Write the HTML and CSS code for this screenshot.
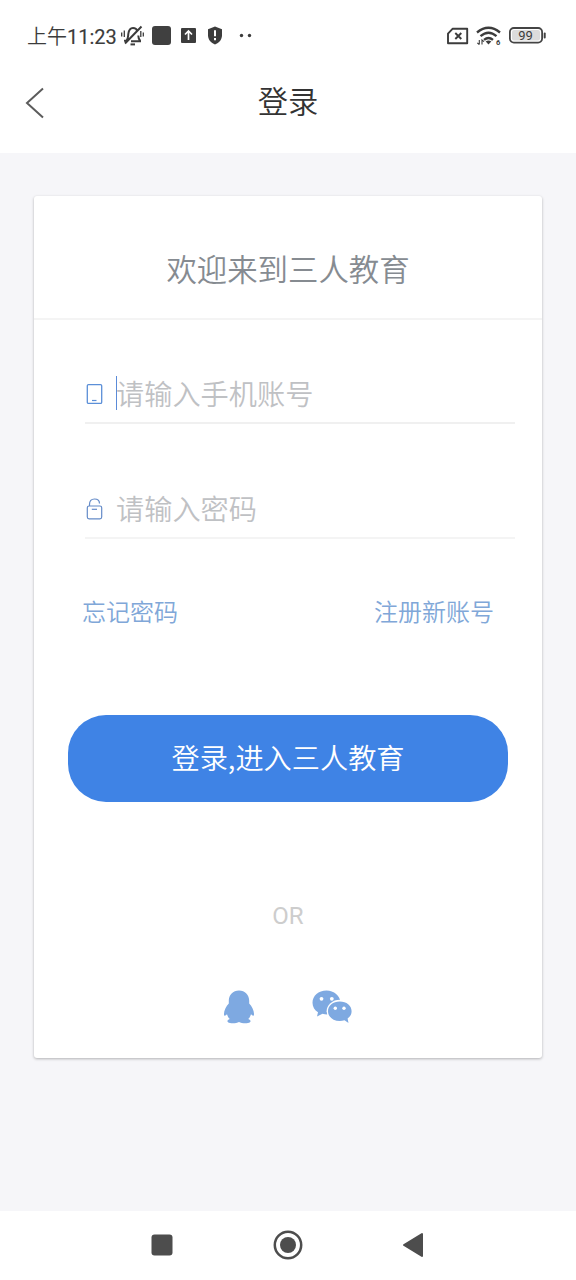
FILE: index.html
```html
<!DOCTYPE html>
<html lang="zh-CN">
<head>
<meta charset="utf-8">
<title>登录</title>
<link rel="stylesheet" href="styles.css">
</head>
<body>
<div class="screen">
  <div class="status">
    <span class="status-zh">上午</span><span class="status-time">11:23</span>
    <svg class="status-left" width="136" height="28" viewBox="118 22 136 28">
      <g fill="none" stroke="#3c3c3c" stroke-width="2">
        <path d="M131 41.200h10M124 40.700h2.500c1.800-2 1.500-4 1.800-6.700c.5-3.800 1.700-6 4.700-6c2.300 0 3.700 1 4.300 3M138.300 35.500c0 2.500.5 4 2 5.500M141.500 26.500l-16.500 17"/>
        <path d="M121.700 32.500v4M124.300 30.500v6.500M143.300 32.500v4M140.800 31v6" stroke-width="1.300"/>
        <path d="M130.500 44.400h4.500"/>
      </g>
      <rect x="152" y="26" width="19" height="19" rx="3" fill="#404040"/>
      <rect x="181" y="28" width="15" height="15" rx="1" fill="#3c3c3c"/>
      <path d="M188.500 40v-8M185 34.500l3.500-3.500l3.500 3.500" fill="none" stroke="#fff" stroke-width="1.700"/>
      <path d="M215 26.500l7 2.700v6c0 4.500-3 7.500-7 9.300c-4-1.800-7-4.800-7-9.300v-6z" fill="#3c3c3c"/>
      <path d="M215 30.200v6M215 38v2.200" stroke="#fff" stroke-width="2"/>
      <circle cx="241.500" cy="35.500" r="1.700" fill="#3c3c3c"/><circle cx="249.500" cy="35.500" r="1.700" fill="#3c3c3c"/>
    </svg>
    <svg class="status-right" width="102" height="28" viewBox="446 22 102 28">
      <path d="M452.500 28.800h14.700v14.400h-19.200v-9.600z" fill="none" stroke="#3c3c3c" stroke-width="1.900" stroke-linejoin="round"/>
      <path d="M455.300 33l6 6M461.300 33l-6 6" stroke="#3c3c3c" stroke-width="1.900"/>
      <g fill="none" stroke="#3c3c3c" stroke-width="2.300">
        <path d="M477 32.500q11.500-9.500 23 0M480.500 36.200q8-7 16 0M484 39.900q4.500-3.800 9 0"/>
      </g>
      <path d="M488.500 44.500l-2.800-3q2.800-2 5.600 0z" fill="#3c3c3c"/>
      <path d="M479.300 40v4.500M477.300 42.800l2 1.700M482 44.500v-4.500l2 1.700" fill="none" stroke="#3c3c3c" stroke-width="1.100"/>
      <text x="496" y="45" class="wifi-six">6</text>
      <rect x="509.900" y="28" width="32.200" height="14.600" rx="4" fill="#fff" stroke="#444" stroke-width="1.800"/>
      <rect x="512" y="30" width="28" height="10.600" rx="2" fill="#dcdcdc"/>
      <path d="M544.700 33.500v4" stroke="#444" stroke-width="2" stroke-linecap="round"/>
      <text x="525.500" y="40" class="battery-text">99</text>
    </svg>
  </div>
  <header class="header">
    <svg class="back" width="20" height="32" viewBox="0 0 20 32"><path d="M18 1.500L2 16L18 30.500" fill="none" stroke="#5c5c5c" stroke-width="2"/></svg>
    <h1 class="title">登录</h1>
  </header>
  <main class="content">
    <section class="card">
      <h2 class="welcome">欢迎来到三人教育</h2>
      <div class="field field-phone">
        <svg width="18" height="24" viewBox="0 0 18 24"><rect x="2.300" y="3.600" width="14.400" height="18.800" rx="1.200" fill="none" stroke="#5b8fd8" stroke-width="1.300"/><path d="M7 19.500h4.500" stroke="#5b8fd8" stroke-width="1.200"/></svg>
        <i class="caret"></i><span class="placeholder">请输入手机账号</span>
      </div>
      <div class="field field-password">
        <svg width="18" height="24" viewBox="0 0 18 24"><rect x="2.300" y="10" width="14.400" height="12.800" rx="1.800" fill="none" stroke="#648bc8" stroke-width="1.200"/><path d="M4.500 10V8.500Q4.500 3 9.500 3T14.500 7.500" fill="none" stroke="#648bc8" stroke-width="1.200"/><path d="M6.800 13.300h5.200" stroke="#648bc8" stroke-width="1.200"/></svg>
        <i class="caret caret-off"></i><span class="placeholder">请输入密码</span>
      </div>
      <div class="links"><span>忘记密码</span><span>注册新账号</span></div>
      <div class="submit">登录,进入三人教育</div>
      <div class="or">OR</div>
      <div class="social">
        <svg width="32" height="34" viewBox="0 0 32 34" fill="#7ea9e1"><path d="M16 .5C10 .5 5.800 4.800 5.800 10.800V13.500C3 16.500 .8 20.500 1 24.500C1.200 26.500 2.600 25.800 4 24.300C4.500 26.300 5.500 27.800 6.800 29C4.300 29.800 4 31.300 5 32.300C7.500 34 13.500 33.500 16 32C18.500 33.500 24.500 34 27 32.300C28 31.300 27.700 29.800 25.200 29C26.500 27.800 27.500 26.300 28 24.300C29.400 25.800 30.800 26.500 31 24.500C31.200 20.500 29 16.500 26.200 13.500V10.800C26.200 4.800 22 .5 16 .5Z"/></svg>
        <svg width="42" height="34" viewBox="0 0 42 34"><path d="M15.500 .5C7.500 .5 1.500 5.800 1.500 12.700C1.500 16.700 3.500 20 7 22.300L6 26.500L11.500 23.800Q17 25.400 22 23.200C27 21 29.500 17 29.500 12.500C29 5.500 23 .5 15.500 .5Z" fill="#7ea9e1"/><ellipse cx="28.800" cy="21.200" rx="13.200" ry="11.400" fill="#fff"/><path d="M28.800 11.500C22 11.500 17 15.700 17 21.200S22 31 28.800 31Q31.300 31 33.500 30.200L37.500 33L36.600 28.500Q40.600 25.500 40.600 21.200C40.600 15.700 35.500 11.500 28.800 11.500Z" fill="#7ea9e1"/><g fill="#fff"><circle cx="10.500" cy="8.800" r="1.900"/><circle cx="20.800" cy="8.800" r="1.900"/><circle cx="24.300" cy="18.300" r="1.700"/><circle cx="33" cy="18.300" r="1.700"/></g></svg>
      </div>
    </section>
  </main>
  <nav class="nav">
    <svg width="22" height="22" viewBox="0 0 22 22"><rect x=".5" y=".5" width="21" height="21" rx="3" fill="#4d4d4d"/></svg>
    <svg width="30" height="30" viewBox="0 0 30 30"><circle cx="15" cy="15" r="13.200" fill="none" stroke="#4d4d4d" stroke-width="2.500"/><circle cx="15" cy="15" r="8" fill="#4d4d4d"/></svg>
    <svg width="22" height="26" viewBox="0 0 22 26"><path d="M2 13L20 2V24Z" fill="#4d4d4d" stroke="#4d4d4d" stroke-width="2" stroke-linejoin="round"/></svg>
  </nav>
</div>
</body>
</html>
```
FILE: styles.css
```css
* { box-sizing: border-box; }
body { margin: 0; font-family: "Noto Sans CJK SC", sans-serif; font-weight: 350; background: #fff; }
svg { display: block; flex: none; }
.screen { width: 576px; height: 1280px; display: flex; flex-direction: column; overflow: hidden; }
.status { height: 72px; padding: 0 28px 0 27px; display: flex; align-items: center; white-space: nowrap; color: #3c3c3c; flex: none; }
.status-zh { font-size: 20px; line-height: 28px; }
.status-time { font-family: Roboto, sans-serif; font-size: 20px; font-weight: 400; -webkit-text-stroke: .15px #3c3c3c; line-height: 28px; padding-top: 2px; width: 51px; }
.status-left { margin-right: auto; }
.wifi-six { font: 700 7.500px Roboto, sans-serif; fill: #3c3c3c; }
.battery-text { font: 400 13px Roboto, sans-serif; fill: #3c3c3c; text-anchor: middle; }
.header { height: 81px; flex: none; display: flex; align-items: flex-start; padding: 15px 25px 0 25px; }
.title { flex: 1; margin: -9px 20px 0 0; text-align: center; font-size: 30.3px; line-height: 44px; font-weight: 350; color: #333; }
.content { height: 1058px; flex: none; background: #f6f6f9; padding: 43px 34px 0; }
.card { height: 862px; background: #fff; border-radius: 3px; box-shadow: 0 1px 3px rgba(0,0,0,.28); display: flex; flex-direction: column; }
.welcome { margin: 0; height: 124px; flex: none; padding-top: 50px; border-bottom: 2px solid #f4f4f4; text-align: center; font-size: 30.4px; line-height: 44px; font-weight: 350; color: #868b91; }
.field { display: flex; align-items: center; margin-left: 51px; margin-right: 27px; border-bottom: 2px solid #f0f0f0; flex: none; }
.field-phone { height: 60px; margin-top: 44px; }
.field-password { height: 60px; margin-top: 55px; border-color: #f4f4f4; }
.caret { width: 1px; height: 34px; margin-left: 13px; background: #5b8bd8; }
.caret-off { background: transparent; }
.placeholder { margin-left: -1px; font-size: 28.2px; line-height: 42px; color: #bfc1c4; }
.links { display: flex; justify-content: space-between; margin: 54px 48px 0 48px; font-size: 24px; line-height: 36px; color: #80a7d8; flex: none; }
.submit { margin: 86px 34px 0; height: 87px; border-radius: 38px; background: #3f83e5; color: #fff; text-align: center; font-size: 28.2px; line-height: 84px; flex: none; }
.or { margin-top: 99px; font: 400 24px/30px Roboto, sans-serif; color: #cdcdcd; text-align: center; flex: none; }
.social { display: flex; gap: 56px; margin: 59px 0 0 189px; }
.nav { height: 69px; flex: none; display: flex; align-items: center; justify-content: space-between; padding: 0 152px 1px 151px; }
```
